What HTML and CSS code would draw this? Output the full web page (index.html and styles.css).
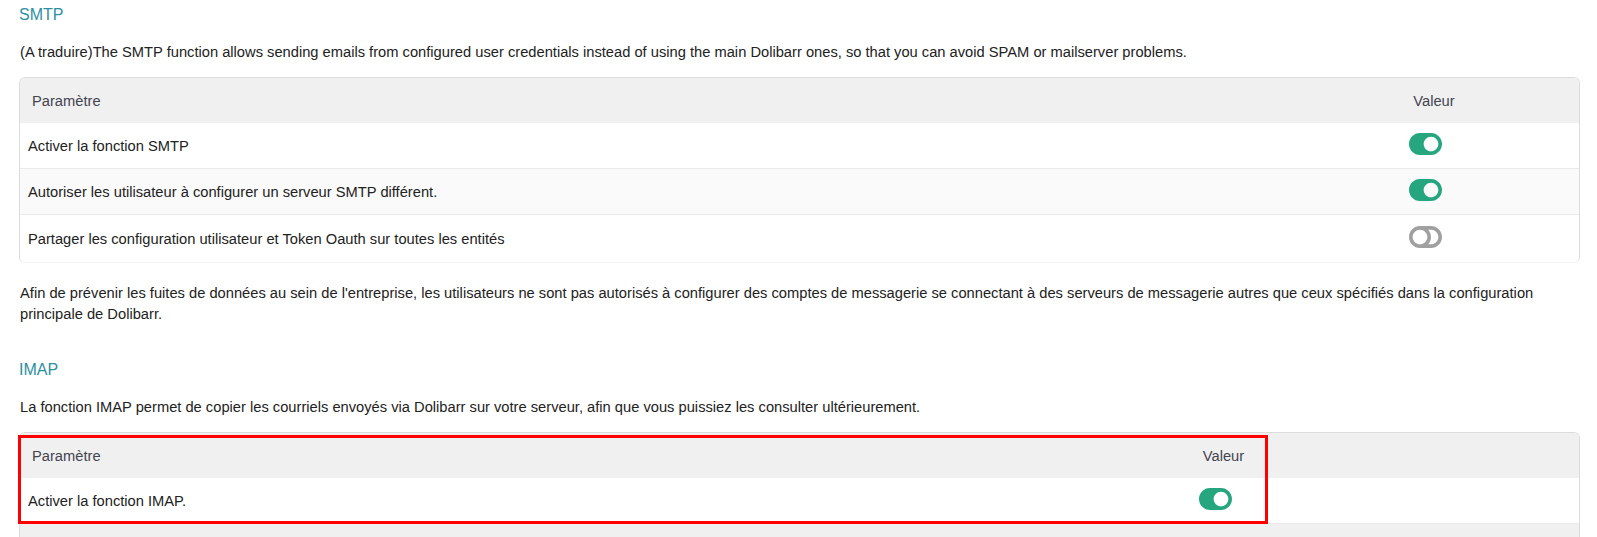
FILE: index.html
```html
<!DOCTYPE html>
<html lang="fr">
<head>
<meta charset="utf-8">
<title>SMTP / IMAP</title>
<link rel="stylesheet" href="styles.css">
</head>
<body>
<div class="page">
  <h2 class="title">SMTP</h2>
  <p class="desc">(A traduire)The SMTP function allows sending emails from configured user credentials instead of using the main Dolibarr ones, so that you can avoid SPAM or mailserver problems.</p>

  <div class="tbl-wrap">
    <table class="tbl tbl-smtp">
      <thead>
        <tr class="head">
          <th class="c-param">Paramètre</th>
          <th class="c-val">Valeur</th>
        </tr>
      </thead>
      <tbody>
        <tr class="row">
          <td class="c-param">Activer la fonction SMTP</td>
          <td class="c-val"><svg class="tog on" viewBox="0 64 576 384" width="33" height="22"><path d="M384 64H192C86 64 0 150 0 256s86 192 192 192h192c106 0 192-86 192-192S490 64 384 64zm0 320c-70.8 0-128-57.3-128-128 0-70.8 57.3-128 128-128 70.8 0 128 57.3 128 128 0 70.8-57.3 128-128 128z"/></svg></td>
        </tr>
        <tr class="row alt">
          <td class="c-param">Autoriser les utilisateur à configurer un serveur SMTP différent.</td>
          <td class="c-val"><svg class="tog on" viewBox="0 64 576 384" width="33" height="22"><path d="M384 64H192C86 64 0 150 0 256s86 192 192 192h192c106 0 192-86 192-192S490 64 384 64zm0 320c-70.8 0-128-57.3-128-128 0-70.8 57.3-128 128-128 70.8 0 128 57.3 128 128 0 70.8-57.3 128-128 128z"/></svg></td>
        </tr>
        <tr class="row last">
          <td class="c-param">Partager les configuration utilisateur et Token Oauth sur toutes les entités</td>
          <td class="c-val"><svg class="tog off" viewBox="0 64 576 384" width="33" height="22"><path d="M384 64H192C85.961 64 0 149.961 0 256s85.961 192 192 192h192c106.039 0 192-85.961 192-192S490.039 64 384 64zM64 256c0-70.741 57.249-128 128-128 70.741 0 128 57.249 128 128 0 70.741-57.249 128-128 128-70.741 0-128-57.249-128-128zm320 128h-48.905c65.217-72.858 65.236-183.12 0-256H384c70.741 0 128 57.249 128 128 0 70.74-57.249 128-128 128z"/></svg></td>
        </tr>
      </tbody>
    </table>
  </div>

  <p class="note">Afin de prévenir les fuites de données au sein de l'entreprise, les utilisateurs ne sont pas autorisés à configurer des comptes de messagerie se connectant à des serveurs de messagerie autres que ceux spécifiés dans la configuration principale de Dolibarr.</p>

  <h2 class="title title-imap">IMAP</h2>
  <p class="desc">La fonction IMAP permet de copier les courriels envoyés via Dolibarr sur votre serveur, afin que vous puissiez les consulter ultérieurement.</p>

  <div class="imap-zone">
    <div class="tbl-wrap">
      <table class="tbl tbl-imap">
        <thead>
          <tr class="head">
            <th class="c-param">Paramètre</th>
            <th class="c-val">Valeur</th>
            <th class="c-extra"></th>
          </tr>
        </thead>
        <tbody>
          <tr class="row">
            <td class="c-param">Activer la fonction IMAP.</td>
            <td class="c-val"><svg class="tog on" viewBox="0 64 576 384" width="33" height="22"><path d="M384 64H192C86 64 0 150 0 256s86 192 192 192h192c106 0 192-86 192-192S490 64 384 64zm0 320c-70.8 0-128-57.3-128-128 0-70.8 57.3-128 128-128 70.8 0 128 57.3 128 128 0 70.8-57.3 128-128 128z"/></svg></td>
            <td class="c-extra"></td>
          </tr>
          <tr class="row next">
            <td class="c-param">&nbsp;</td>
            <td class="c-val"></td>
            <td class="c-extra"></td>
          </tr>
        </tbody>
      </table>
    </div>
    <div class="highlight"></div>
  </div>
</div>
</body>
</html>
```

FILE: styles.css
```css
html, body {
  margin: 0;
  padding: 0;
  background: #ffffff;
}

body {
  font-family: "Liberation Sans", Arial, sans-serif;
  font-size: 14.7px;
  color: #222222;
}

.page {
  padding: 0 17px 0 19px;
}

.title {
  margin: 0;
  padding-top: 5px;
  font-size: 16px;
  line-height: 20px;
  font-weight: normal;
  color: #2e8fa1;
}

.title-imap {
  padding-top: 0;
  margin-top: 35px;
}

.desc {
  margin: 17px 0 0 1px;
  line-height: 21px;
}

.note {
  margin: 20px 0 0 1px;
  line-height: 21px;
}

.tbl-wrap {
  margin-top: 14px;
  border: 1px solid #dcdcdc;
  border-bottom-color: #f2f2f2;
  border-radius: 6px;
  overflow: hidden;
}

.tbl {
  width: 100%;
  border-collapse: collapse;
  table-layout: fixed;
}

.head th {
  height: 45px;
  padding: 0;
  background: #f0f0f0;
  font-weight: normal;
  color: #44444f;
  text-align: left;
}

.head th.c-param {
  padding-left: 12px;
}

.head th.c-val {
  text-align: center;
}

.row td {
  height: 45px;
  padding: 0;
  border-bottom: 1px solid #e9e9e9;
  background: #ffffff;
}

.row.alt td {
  background: #fafafa;
}

.row.last td {
  height: 47px;
  border-bottom: none;
}

.row td.c-param {
  padding-left: 8px;
}

.row td.c-val {
  text-align: center;
  padding-right: 17px;
}

.tog {
  display: inline-block;
  vertical-align: middle;
  position: relative;
  top: -2px;
}

.tog.on {
  fill: #26a67f;
}

.tog.off {
  fill: #a0a0a0;
}

.tbl-smtp .c-val {
  width: 290px;
}

.tbl-imap .c-val {
  width: 83px;
}

.tbl-imap .c-extra {
  width: 314px;
}

.tbl-imap .row td.c-val {
  padding-right: 16px;
}

.row.next td {
  background: #f0f0f0;
  border-bottom: none;
}

.imap-zone {
  position: relative;
}

.highlight {
  position: absolute;
  left: -1px;
  top: 3px;
  width: 1250px;
  height: 89px;
  box-sizing: border-box;
  border: 3px solid #ff0000;
  pointer-events: none;
}
```
